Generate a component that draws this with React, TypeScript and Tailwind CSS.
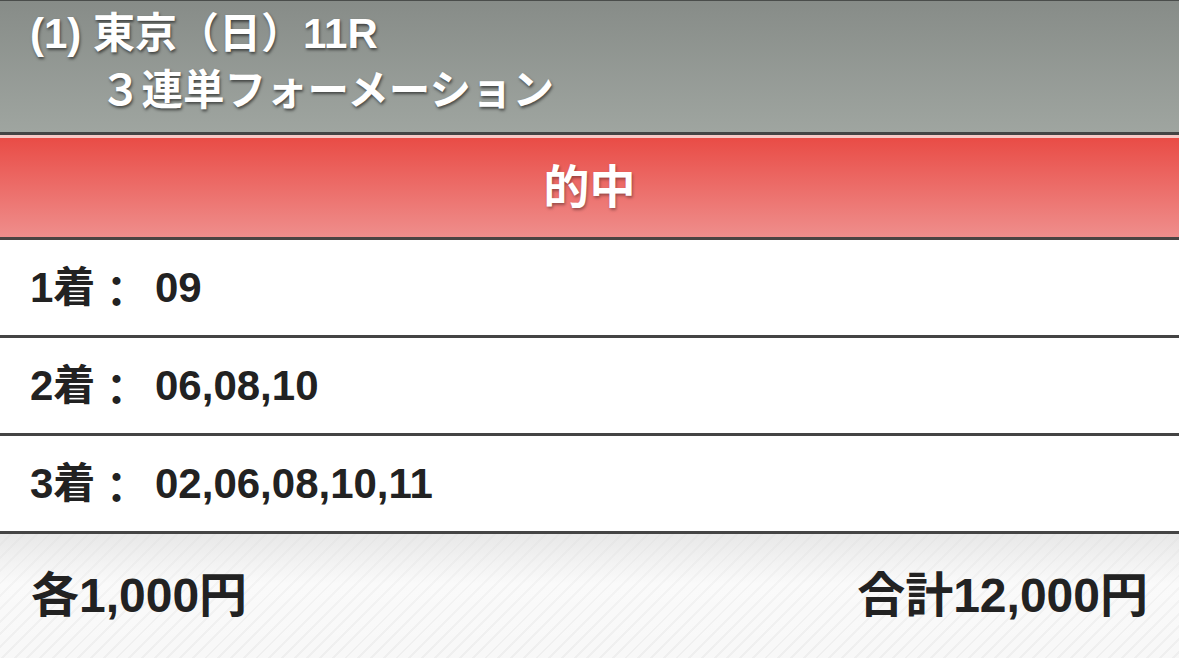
import React from "react";

const font = { fontFamily: '"Liberation Sans", "Noto Sans CJK JP", sans-serif' };

function Row({ n, value }: { n: string; value: string }) {
  return (
    <div className="flex h-[98px] items-center bg-white pl-[30px] text-[42px] font-bold text-[#222222] border-b-[3px] border-[#444444]">
      <span className="w-[125px] shrink-0">
        {n}着<span className="relative top-[5px]">：</span>
      </span>
      <span>{value}</span>
    </div>
  );
}

export default function App() {
  return (
    <div className="w-[1179px] h-[658px] overflow-hidden bg-white" style={font}>
      <div className="h-[135px] border-t border-[#4a4d4b] border-b-[3px] border-b-[#444444] bg-[linear-gradient(to_bottom,#878c88,#9fa5a0)] text-white font-bold [text-shadow:1px_2px_3px_rgba(0,0,0,0.55)]">
        <div className="pl-[30px] pt-[4px] text-[42px] leading-[57px] whitespace-pre">(1) 東京（日）11R</div>
        <div className="pl-[100px] text-[41.5px] leading-[57px] whitespace-pre">３連単フォーメーション</div>
      </div>
      <div className="h-[3px] bg-[#f7c9c6]" />
      <div className="flex h-[102px] items-center justify-center border-b-[3px] border-[#4a4443] bg-[linear-gradient(to_bottom,#e94c46,#ef8e8c)] text-[46px] font-bold text-white [text-shadow:1px_2px_3px_rgba(0,0,0,0.35)]">
        的中
      </div>
      <Row n="1" value="09" />
      <Row n="2" value="06,08,10" />
      <Row n="3" value="02,06,08,10,11" />
      <div className="relative h-[124px] bg-[repeating-linear-gradient(135deg,#f4f4f4_0px,#f4f4f4_7px,#e6e6e6_7px,#e6e6e6_9px)]">
        <div className="absolute inset-0 bg-[linear-gradient(to_bottom,rgba(228,228,228,0.75),rgba(255,255,255,0.55)_40%,rgba(255,255,255,0.35)_100%)]" />
        <div className="relative flex h-full items-center justify-between px-[31px] text-[48px] font-bold text-[#222222]">
          <span>各1,000円</span>
          <span>合計12,000円</span>
        </div>
      </div>
    </div>
  );
}
